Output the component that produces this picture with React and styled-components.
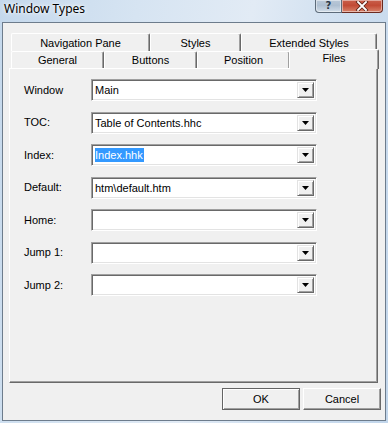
import React from "react";
import styled, { createGlobalStyle } from "styled-components";

const GlobalStyle = createGlobalStyle`
  html, body {
    margin: 0;
    padding: 0;
    background: #cfdff0;
  }
  body {
    font-family: "Liberation Sans", Arial, sans-serif;
    font-size: 11px;
    color: #000;
  }
`;

const Frame = styled.div`
  width: 388px;
  height: 423px;
  display: flex;
  flex-direction: column;
  background: linear-gradient(100deg, #c4d8ec 0%, #d6e4f2 30%, #e2ebf5 55%, #cfdff0 75%, #c2d6eb 100%);
  overflow: hidden;
`;

const TitleBar = styled.div`
  height: 22px;
  display: flex;
  justify-content: space-between;
  align-items: flex-start;
  padding: 0 5px 0 4px;
  flex-shrink: 0;
`;

const Title = styled.div`
  font-family: "Noto Sans", "Liberation Sans", sans-serif;
  font-size: 12px;
  line-height: 12px;
  padding-top: 3px;
  color: #000;
  text-shadow: 0 0 6px rgba(255, 255, 255, 0.9), 0 0 3px #fff;
`;

const Caption = styled.div`
  display: flex;
`;

const CaptionButton = styled.div`
  width: ${(p) => p.$w}px;
  height: 12px;
  display: flex;
  align-items: center;
  justify-content: center;
  border: 1px solid ${(p) => (p.$close ? "#6b2a20" : "#5d6b7a")};
  border-top: none;
  border-radius: ${(p) => (p.$close ? "0 0 4px 0" : "0 0 0 4px")};
  border-left-width: ${(p) => (p.$close ? 0 : 1)}px;
  background: ${(p) =>
    p.$close
      ? "linear-gradient(180deg, #c9604c 0%, #c24a35 45%, #d9826a 100%)"
      : "linear-gradient(180deg, #b9c8d8 0%, #aebfd1 45%, #d3dee9 100%)"};
  box-shadow: inset 0 0 0 1px rgba(255, 255, 255, 0.45);
  color: #2c3a48;
  font-family: "DejaVu Sans", sans-serif;
  font-weight: bold;
  font-size: 10px;
  line-height: 10px;
`;

const Client = styled.div`
  flex: 1;
  margin: 0 2px 2px 2px;
  border: 1px solid #6d7c8c;
  background: #f0f0f0;
  display: flex;
  flex-direction: column;
  padding: 10px 0 0 6px;
`;

const TabArea = styled.div`
  display: flex;
  flex-direction: column;
  width: 369px;
`;

const TabRow = styled.div`
  display: flex;
  align-items: flex-end;
  height: ${(p) => p.$h}px;
  padding-left: 2px;
  position: relative;
  z-index: ${(p) => p.$z};
`;

const Tab = styled.div`
  width: ${(p) => p.$w}px;
  height: ${(p) => (p.$active ? 20 : p.$h)}px;
  margin: ${(p) => (p.$active ? "0 -2px -1px -1px" : "0")};
  box-sizing: border-box;
  display: flex;
  justify-content: center;
  align-items: center;
  padding-bottom: ${(p) => (p.$active ? 3 : 0)}px;
  background: #f0f0f0;
  border-top: 1px solid #fff;
  border-left: 1px solid #fff;
  border-right: 1px solid #696969;
  border-radius: 2px 2px 0 0;
  box-shadow: inset -1px 0 0 #a0a0a0;
  position: relative;
  z-index: ${(p) => (p.$active ? 3 : 1)};
`;

const Panel = styled.div`
  height: 315px;
  box-sizing: border-box;
  border-top: 1px solid #fff;
  border-left: 1px solid #fff;
  border-right: 1px solid #696969;
  border-bottom: 1px solid #696969;
  box-shadow: inset -1px -1px 0 #a0a0a0;
  display: flex;
  flex-direction: column;
  gap: 10.5px;
  padding: 10px 0 0 14px;
`;

const Row = styled.div`
  display: flex;
  align-items: center;
  height: 22px;
`;

const Label = styled.div`
  width: 67px;
  padding-bottom: 1px;
`;

const Combo = styled.div`
  width: 226px;
  height: 22px;
  box-sizing: border-box;
  display: flex;
  align-items: center;
  background: #fff;
  border: 1px solid;
  border-color: #a0a0a0 #fff #fff #a0a0a0;
  box-shadow: inset 1px 1px 0 #696969, inset -1px -1px 0 #e3e3e3;
  padding: 2px 2px 2px 3px;
`;

const Value = styled.div`
  flex: 1;
  display: flex;
  align-items: center;
  height: 16px;
`;

const Selected = styled.span`
  background: #3399ff;
  color: #fff;
  padding: 0 1px 0 0;
  line-height: 14px;
`;

const DropButton = styled.div`
  width: 17px;
  height: 16px;
  box-sizing: border-box;
  display: flex;
  align-items: center;
  justify-content: center;
  background: #f0f0f0;
  border: 1px solid;
  border-color: #e3e3e3 #696969 #696969 #e3e3e3;
  box-shadow: inset 1px 1px 0 #fff, inset -1px -1px 0 #a0a0a0;
`;

const Footer = styled.div`
  display: flex;
  justify-content: flex-end;
  gap: 3px;
  padding: 5px 4px 0 0;
`;

const Button = styled.div`
  width: 78px;
  height: 22px;
  box-sizing: border-box;
  display: flex;
  align-items: center;
  justify-content: center;
  background: #f0f0f0;
  border: 1px solid;
  border-color: ${(p) => (p.$default ? "#646464" : "#fff #696969 #696969 #fff")};
  box-shadow: ${(p) =>
    p.$default
      ? "inset 1px 1px 0 #fff, inset -1px -1px 0 #a0a0a0"
      : "inset -1px -1px 0 #a0a0a0"};
`;

const Arrow = () => (
  <svg width="7" height="4" viewBox="0 0 7 4">
    <path d="M0 0h7L3.5 4z" fill="#000" />
  </svg>
);

const CloseGlyph = () => (
  <svg width="14" height="10" viewBox="0 0 14 10">
    <path d="M3 1l8 8M11 1l-8 8" stroke="#5a2218" strokeWidth="3.4" strokeLinecap="square" />
    <path d="M3 1l8 8M11 1l-8 8" stroke="#fff" strokeWidth="1.8" strokeLinecap="square" />
  </svg>
);

const fields = [
  { label: "Window", value: "Main" },
  { label: "TOC:", value: "Table of Contents.hhc" },
  { label: "Index:", value: "Index.hhk", selected: true },
  { label: "Default:", value: "htm\\default.htm" },
  { label: "Home:", value: "" },
  { label: "Jump 1:", value: "" },
  { label: "Jump 2:", value: "" },
];

export default function App() {
  return (
    <>
      <GlobalStyle />
      <Frame>
        <TitleBar>
          <Title>Window Types</Title>
          <Caption>
            <CaptionButton $w={25}>?</CaptionButton>
            <CaptionButton $w={40} $close>
              <CloseGlyph />
            </CaptionButton>
          </Caption>
        </TitleBar>
        <Client>
          <TabArea>
            <TabRow $h={18} $z={1}>
              <Tab $h={18} $w={139}>Navigation Pane</Tab>
              <Tab $h={18} $w={91}>Styles</Tab>
              <Tab $h={18} $w={136}>Extended Styles</Tab>
            </TabRow>
            <TabRow $h={17} $z={2}>
              <Tab $h={17} $w={93}>General</Tab>
              <Tab $h={17} $w={93}>Buttons</Tab>
              <Tab $h={17} $w={93}>Position</Tab>
              <Tab $h={17} $w={90} $active>Files</Tab>
            </TabRow>
            <Panel>
              {fields.map((f) => (
                <Row key={f.label}>
                  <Label>{f.label}</Label>
                  <Combo>
                    <Value>{f.selected ? <Selected>{f.value}</Selected> : f.value}</Value>
                    <DropButton>
                      <Arrow />
                    </DropButton>
                  </Combo>
                </Row>
              ))}
            </Panel>
          </TabArea>
          <Footer>
            <Button $default>OK</Button>
            <Button>Cancel</Button>
          </Footer>
        </Client>
      </Frame>
    </>
  );
}
